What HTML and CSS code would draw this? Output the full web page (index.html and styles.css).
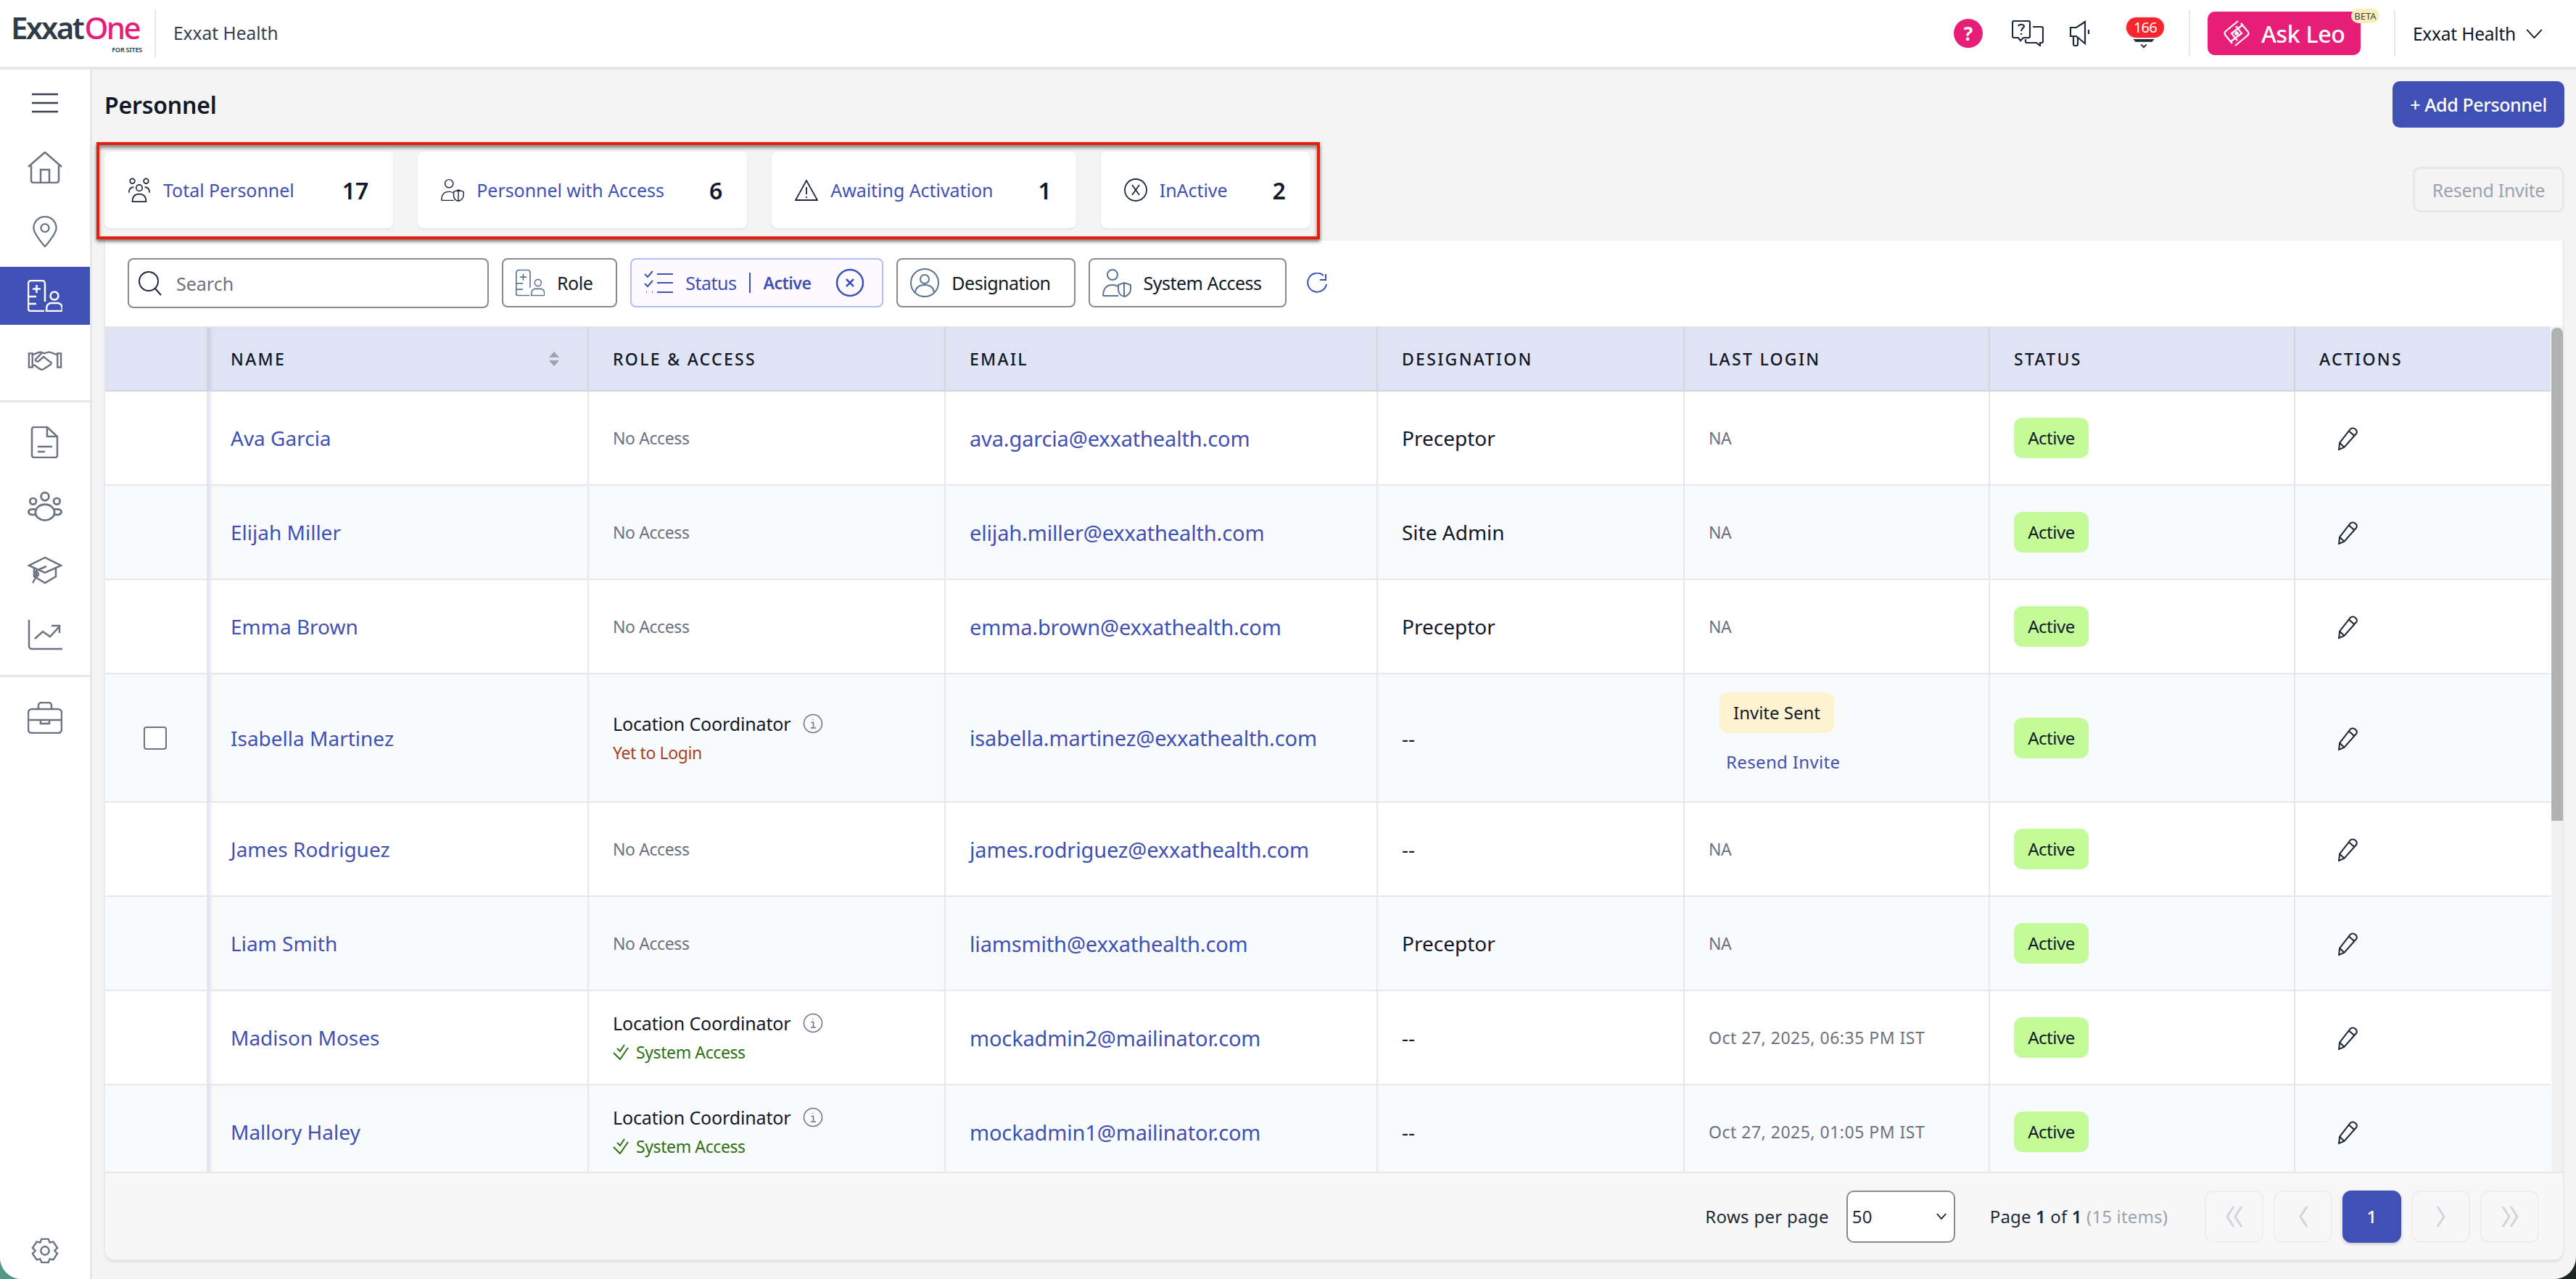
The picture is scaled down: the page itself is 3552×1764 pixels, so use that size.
FILE: index.html
```html
<!DOCTYPE html>
<html lang="en">
<head>
    <meta charset="UTF-8">
    <title>Personnel</title>
    <link rel="stylesheet" href="styles.css">
</head>
<body>
<svg class="defs" width="0" height="0">
    <symbol id="i-role" viewBox="0 0 48 44"><path d="M24 30V5a4 4 0 0 0-4-4H5a4 4 0 0 0-4 4v35a3 3 0 0 0 3 3h19M1 23h11M1 33h11"/><path d="M12.500 7v11M7 12.500h11"/><circle cx="37" cy="22" r="5.500"/><path d="M26 43c0-7 1-10 6-11h10c5 1 6 4 6 11z"/></symbol>
    <symbol id="i-pencil" viewBox="0 0 32 32"><path d="M3 30l1-9L18 3c2-2 5-2 7 0s3 4 1 6L10 27z"/><path d="M16 5l8 7M4 21l6 6"/></symbol>
    <symbol id="i-shield-user" viewBox="0 0 40 40"><circle cx="14" cy="9" r="7"/><path d="M1 38c0-10 4-15 13-15 3 0 5 .5 7 2M1 38h21"/><path d="M30 20l9 3v6c0 5-4 9-9 10-5-1-8-5-8-10v-6zM30 20v19"/></symbol>
    <symbol id="i-info" viewBox="0 0 28 28"><circle cx="14" cy="14" r="12.500"/><path d="M11.500 12.500H14.500V20M11 20h7M14 8v1"/></symbol>
    <symbol id="i-checks" viewBox="0 0 22 22"><path d="M1 12l9 9L21 5M6 6l4 4 6-9"/></symbol>
</svg>

<div class="app">
    <header class="topbar">
        <div class="brand">
            <div class="logo">
                <div class="logo-name">Exxat <span class="logo-one">One</span></div>
                <div class="logo-sub">FOR SITES</div>
            </div>
            <span class="brand-org">Exxat Health</span>
        </div>
        <div class="top-actions">
            <span class="help-dot">?</span>
            <svg class="top-icon" viewBox="0 0 44 36"><path d="M3 1h20a2 2 0 0 1 2 2v19a2 2 0 0 1-2 2h-7l-4 4-3-4H3a2 2 0 0 1-2-2V3a2 2 0 0 1 2-2z"/><path d="M29 9h12a2 2 0 0 1 2 2v18a2 2 0 0 1-2 2h-2v4l-5-4H21a2 2 0 0 1-2-2v-3"/><path d="M9 8c1-3 7-3 8 0 0 3-4 3-4 7M13 18v2"/></svg>
            <svg class="top-icon top-icon-mega" viewBox="0 0 36 36"><path d="M22 2L10 10H2v12h8l12 10zM27 13v6M6 22v11a2 2 0 0 0 2 2h2a2 2 0 0 0 2-2V24"/></svg>
            <div class="bell">
                <span class="bell-badge">166</span>
                <svg class="bell-icon" viewBox="0 0 32 16"><path d="M1 3h30M4 3v2h24V3M12 10l4 4 4-4"/></svg>
            </div>
            <span class="top-sep"></span>
            <div class="ask-leo">
                <svg class="leo-icon" viewBox="0 0 40 38"><path d="M22 2L5 16c-2 2-2 4 0 6l9 11M29 7L13 19l8 10M18 36l17-14c2-2 2-4 0-6L26 5M11 31l16-12-8-10"/><path d="M20 17l2 2-2 2-2-2z" fill="#fff"/></svg>
                <span>Ask Leo</span>
                <span class="beta">BETA</span>
            </div>
            <span class="top-sep top-sep-2"></span>
            <div class="org-menu">
                <span>Exxat Health</span>
                <svg viewBox="0 0 24 14"><path d="M1 1l11 12L23 1"/></svg>
            </div>
        </div>
    </header>

    <div class="workspace">
        <nav class="sidebar">
            <div class="nav-item"><svg class="nav-burger" viewBox="0 0 36 28"><path d="M0 2h36M0 14h36M0 26h36"/></svg></div>
            <div class="nav-item"><svg class="nav-icon" viewBox="0 0 48 44"><path d="M1 21L24 1l23 20M5 19v21a3 3 0 0 0 3 3h32a3 3 0 0 0 3-3V19M18 43V25h12v18"/></svg></div>
            <div class="nav-item"><svg class="nav-icon" viewBox="0 0 48 48"><path d="M24 2C14 2 7 10 7 19c0 9 17 28 17 28s17-19 17-28C41 10 34 2 24 2z"/><circle cx="24" cy="19" r="6"/></svg></div>
            <div class="nav-item nav-active"><svg class="nav-icon"><use href="#i-role"/></svg></div>
            <div class="nav-item"><svg class="nav-icon nav-shake" viewBox="0 0 50 30"><path d="M2 6h5v20H2zM43 6h5v20h-5zM7 8l8-3c4-2 6 0 9 1l7-2 12 4M7 23h3l7 5c3 2 5 2 7 0l9-6c2-2 1-4-1-4l-9-7-7 6c-3 2-6-1-4-3l8-8"/></svg></div>
            <hr class="nav-line">
            <div class="nav-item"><svg class="nav-icon" viewBox="0 0 40 44"><path d="M5 1h18l14 13v26a3 3 0 0 1-3 3H5a3 3 0 0 1-3-3V4a3 3 0 0 1 3-3zM23 1v13h14M10 28h20M10 35h10"/></svg></div>
            <div class="nav-item"><svg class="nav-icon" viewBox="0 0 44 38"><circle cx="22" cy="6" r="5"/><circle cx="7" cy="12" r="4"/><circle cx="37" cy="12" r="4"/><path d="M10 26c0-6 6-10 12-10s12 4 12 10c0 6-6 10-12 10s-12-4-12-10zM10 22H5c-5 1-5 6 0 7h6M34 22h5c5 1 5 6 0 7h-6"/></svg></div>
            <div class="nav-item"><svg class="nav-icon" viewBox="0 0 48 38"><path d="M24 1L2 12l22 10 22-10zM9 16v11l15 9 15-9V16M26 13L12 19v8M12 27l-5 9"/><circle cx="12" cy="24" r="3"/></svg></div>
            <div class="nav-item"><svg class="nav-icon" viewBox="0 0 48 42"><path d="M2 0v36a4 4 0 0 0 4 4h42M10 26l11-10 10 7 13-14M33 8h11v10"/></svg></div>
            <hr class="nav-line">
            <div class="nav-item"><svg class="nav-icon" viewBox="0 0 48 44"><rect x="1" y="10" width="46" height="33" rx="5"/><path d="M15 10V5a4 4 0 0 1 4-4h10a4 4 0 0 1 4 4v5M1 25h46M18 25v5h12v-5"/></svg></div>
            <div class="nav-item nav-bottom"><svg class="nav-icon nav-gear" viewBox="0 0 40 38"><path d="M15 2h10l2 5 5-1 6 9-4 4 4 4-6 9-5-1-2 5H15l-2-5-5 1-6-9 4-4-4-4 6-9 5 1z"/><circle cx="20" cy="19" r="6"/></svg></div>
        </nav>

        <main class="main">
            <div class="page-head">
                <h1>Personnel</h1>
                <button class="btn-primary">+ Add Personnel</button>
            </div>

            <div class="summary-row">
                <div class="summary-box">
                    <div class="stat">
                        <svg class="stat-icon" viewBox="0 0 32 36"><circle cx="6" cy="5" r="3.500"/><circle cx="26" cy="5" r="3.500"/><circle cx="16" cy="15" r="4.500"/><path d="M1 22c0-6 3-8 7-8M31 22c0-6-3-8-7-8M6 35c0-7 3-11 10-11s10 4 10 11z"/></svg>
                        <span class="stat-label">Total Personnel</span><b class="stat-num">17</b>
                    </div>
                    <div class="stat">
                        <svg class="stat-icon"><use href="#i-shield-user"/></svg>
                        <span class="stat-label">Personnel with Access</span><b class="stat-num">6</b>
                    </div>
                    <div class="stat">
                        <svg class="stat-icon" viewBox="0 0 32 30"><path d="M16 2L1 29h30zM16 11v10M16 24v2"/></svg>
                        <span class="stat-label">Awaiting Activation</span><b class="stat-num">1</b>
                    </div>
                    <div class="stat">
                        <svg class="stat-icon" viewBox="0 0 32 32"><circle cx="16" cy="16" r="15"/><path d="M11 9l10 14M21 9L11 23"/></svg>
                        <span class="stat-label">InActive</span><b class="stat-num">2</b>
                    </div>
                </div>
                <button class="btn-disabled">Resend Invite</button>
            </div>

            <section class="panel">
                <div class="toolbar">
                    <div class="search">
                        <svg viewBox="0 0 32 34"><circle cx="14" cy="14" r="13"/><path d="M23 24l8 9"/></svg>
                        <span>Search</span>
                    </div>
                    <div class="filter"><svg class="filter-icon"><use href="#i-role"/></svg><span>Role</span></div>
                    <div class="filter filter-on">
                        <svg class="filter-icon" viewBox="0 0 40 34"><path d="M1 5l4 4 7-8M1 18l4 4 7-8M18 5h22M18 17h22M18 30h22M3 30h1M11 30h1"/></svg>
                        <span class="filter-key">Status</span>
                        <span class="filter-bar"></span>
                        <b class="filter-val">Active</b>
                        <svg class="filter-x" viewBox="0 0 40 40"><circle cx="20" cy="20" r="18"/><path d="M15 15l10 10M25 15L15 25"/></svg>
                    </div>
                    <div class="filter"><svg class="filter-icon" viewBox="0 0 40 40"><circle cx="20" cy="20" r="19"/><circle cx="20" cy="15" r="6"/><path d="M7 33c1-7 6-10 13-10s12 3 13 10"/></svg><span>Designation</span></div>
                    <div class="filter"><svg class="filter-icon"><use href="#i-shield-user"/></svg><span>System Access</span></div>
                    <svg class="refresh" viewBox="0 0 30 30"><path d="M24 4A13 13 0 1 0 28 16M27 2v8h-8"/></svg>
                </div>

                <div class="table-area">
                    <div class="table-wrap">
                        <table>
                            <colgroup>
                                <col class="c-check"><col class="c-name"><col class="c-role"><col class="c-email"><col class="c-desig"><col class="c-login"><col class="c-status"><col class="c-actions">
                            </colgroup>
                            <thead>
                                <tr>
                                    <th></th>
                                    <th class="name-cell"><div class="th-sort">NAME<svg viewBox="0 0 16 22"><path d="M8 1l7 8H1zM8 21l7-8H1z"/></svg></div></th>
                                    <th>ROLE &amp; ACCESS</th>
                                    <th>EMAIL</th>
                                    <th>DESIGNATION</th>
                                    <th>LAST LOGIN</th>
                                    <th>STATUS</th>
                                    <th>ACTIONS</th>
                                </tr>
                            </thead>
                            <tbody>
                                <tr>
                                    <td></td>
                                    <td class="name-cell"><a>Ava Garcia</a></td>
                                    <td class="muted">No Access</td>
                                    <td><a class="email">ava.garcia@exxathealth.com</a></td>
                                    <td>Preceptor</td>
                                    <td class="muted">NA</td>
                                    <td><span class="pill">Active</span></td>
                                    <td class="action-cell"><svg class="edit"><use href="#i-pencil"/></svg></td>
                                </tr>
                                <tr>
                                    <td></td>
                                    <td class="name-cell"><a>Elijah Miller</a></td>
                                    <td class="muted">No Access</td>
                                    <td><a class="email">elijah.miller@exxathealth.com</a></td>
                                    <td>Site Admin</td>
                                    <td class="muted">NA</td>
                                    <td><span class="pill">Active</span></td>
                                    <td class="action-cell"><svg class="edit"><use href="#i-pencil"/></svg></td>
                                </tr>
                                <tr>
                                    <td></td>
                                    <td class="name-cell"><a>Emma Brown</a></td>
                                    <td class="muted">No Access</td>
                                    <td><a class="email">emma.brown@exxathealth.com</a></td>
                                    <td>Preceptor</td>
                                    <td class="muted">NA</td>
                                    <td><span class="pill">Active</span></td>
                                    <td class="action-cell"><svg class="edit"><use href="#i-pencil"/></svg></td>
                                </tr>
                                <tr class="row-tall">
                                    <td class="check-cell"><span class="checkbox"></span></td>
                                    <td class="name-cell"><a>Isabella Martinez</a></td>
                                    <td>
                                        <div class="role-line">Location Coordinator<svg class="info"><use href="#i-info"/></svg></div>
                                        <div class="role-sub role-pending">Yet to Login</div>
                                    </td>
                                    <td><a class="email">isabella.martinez@exxathealth.com</a></td>
                                    <td>--</td>
                                    <td class="invite-cell">
                                        <span class="pill pill-invite">Invite Sent</span>
                                        <a class="resend">Resend Invite</a>
                                    </td>
                                    <td><span class="pill">Active</span></td>
                                    <td class="action-cell"><svg class="edit"><use href="#i-pencil"/></svg></td>
                                </tr>
                                <tr>
                                    <td></td>
                                    <td class="name-cell"><a>James Rodriguez</a></td>
                                    <td class="muted">No Access</td>
                                    <td><a class="email">james.rodriguez@exxathealth.com</a></td>
                                    <td>--</td>
                                    <td class="muted">NA</td>
                                    <td><span class="pill">Active</span></td>
                                    <td class="action-cell"><svg class="edit"><use href="#i-pencil"/></svg></td>
                                </tr>
                                <tr>
                                    <td></td>
                                    <td class="name-cell"><a>Liam Smith</a></td>
                                    <td class="muted">No Access</td>
                                    <td><a class="email">liamsmith@exxathealth.com</a></td>
                                    <td>Preceptor</td>
                                    <td class="muted">NA</td>
                                    <td><span class="pill">Active</span></td>
                                    <td class="action-cell"><svg class="edit"><use href="#i-pencil"/></svg></td>
                                </tr>
                                <tr>
                                    <td></td>
                                    <td class="name-cell"><a>Madison Moses</a></td>
                                    <td>
                                        <div class="role-line">Location Coordinator<svg class="info"><use href="#i-info"/></svg></div>
                                        <div class="role-sub role-ok"><svg class="checks"><use href="#i-checks"/></svg>System Access</div>
                                    </td>
                                    <td><a class="email">mockadmin2@mailinator.com</a></td>
                                    <td>--</td>
                                    <td class="muted login-date">Oct 27, 2025, 06:35 PM IST</td>
                                    <td><span class="pill">Active</span></td>
                                    <td class="action-cell"><svg class="edit"><use href="#i-pencil"/></svg></td>
                                </tr>
                                <tr>
                                    <td></td>
                                    <td class="name-cell"><a>Mallory Haley</a></td>
                                    <td>
                                        <div class="role-line">Location Coordinator<svg class="info"><use href="#i-info"/></svg></div>
                                        <div class="role-sub role-ok"><svg class="checks"><use href="#i-checks"/></svg>System Access</div>
                                    </td>
                                    <td><a class="email">mockadmin1@mailinator.com</a></td>
                                    <td>--</td>
                                    <td class="muted login-date">Oct 27, 2025, 01:05 PM IST</td>
                                    <td><span class="pill">Active</span></td>
                                    <td class="action-cell"><svg class="edit"><use href="#i-pencil"/></svg></td>
                                </tr>
                            </tbody>
                        </table>
                    </div>
                    <div class="scroll-track"><div class="scroll-thumb"></div></div>
                </div>

                <footer class="pager-bar">
                    <span class="rows-label">Rows per page</span>
                    <div class="rows-select"><span>50</span><svg viewBox="0 0 16 10"><path d="M1 1l7 8 7-8"/></svg></div>
                    <span class="page-info">Page <b>1</b> of <b>1</b> <span class="page-items">(15 items)</span></span>
                    <div class="pager">
                        <span class="page-btn"><svg viewBox="0 0 26 30"><path d="M12 1L3 15l9 14M23 1l-9 14 9 14"/></svg></span>
                        <span class="page-btn"><svg viewBox="0 0 26 30"><path d="M18 1L9 15l9 14"/></svg></span>
                        <span class="page-btn page-current">1</span>
                        <span class="page-btn"><svg viewBox="0 0 26 30"><path d="M8 1l9 14-9 14"/></svg></span>
                        <span class="page-btn"><svg viewBox="0 0 26 30"><path d="M3 1l9 14-9 14M14 1l9 14-9 14"/></svg></span>
                    </div>
                </footer>
            </section>
        </main>
    </div>
</div>
</body>
</html>
```

FILE: styles.css
```css
* {
    box-sizing: border-box;
}
html, body {
    height: 100%;
}
body {
    margin: 0;
    font-family: "Noto Sans", "Open Sans", sans-serif;
    font-size: 26px;
    color: #111827;
    background: linear-gradient(90deg, #4f9a85 0 4%, #1c2622 96%);
    overflow: hidden;
}
svg {
    fill: none;
    stroke: currentColor;
    stroke-width: 2;
    flex: none;
}
.defs {
    position: absolute;
}
.app {
    height: 1764px;
    width: 3552px;
    display: flex;
    flex-direction: column;
    background: #f4f4f4;
    border-radius: 0 0 30px 30px;
    overflow: hidden;
}

/* top bar */
.topbar {
    height: 96px;
    flex: none;
    display: flex;
    align-items: center;
    justify-content: space-between;
    background: #fff;
    border-bottom: 4px solid #e5e7eb;
}
.brand {
    display: flex;
    align-items: center;
    padding-left: 15px;
}
.logo {
    width: 198px;
    height: 66px;
    padding-right: 17px;
}
.logo-name {
    font-size: 42px;
    font-weight: 600;
    line-height: 50px;
    letter-spacing: -2.600px;
    color: #2f3b47;
    white-space: nowrap;
    word-spacing: -6px;
}
.logo-one {
    color: #e61e78;
    font-weight: 500;
}
.logo-sub {
    font-size: 9px;
    font-weight: 600;
    line-height: 12px;
    text-align: right;
    color: #2f3b47;
    letter-spacing: -.2px;
}
.brand-org {
    font-size: 24.500px;
    color: #374151;
    padding-left: 24px;
    border-left: 2px solid #e5e7eb;
    line-height: 66px;
}
.top-actions {
    display: flex;
    align-items: center;
    padding-right: 46px;
}
.help-dot {
    width: 40px;
    height: 40px;
    border-radius: 50%;
    background: #e61e78;
    color: #fff;
    font-weight: 700;
    font-size: 26px;
    display: flex;
    align-items: center;
    justify-content: center;
}
.top-icon {
    width: 44px;
    height: 36px;
    margin-left: 40px;
    color: #1f2937;
    stroke-width: 2.200;
}
.top-icon-mega {
    width: 36px;
    margin-left: 35px;
}
.bell {
    width: 52px;
    margin-left: 43px;
    height: 44px;
    display: flex;
    flex-direction: column;
    align-items: center;
}
.bell-badge {
    width: 52px;
    height: 28px;
    background: #f9252e;
    color: #fff;
    border-radius: 14px;
    font-size: 20px;
    line-height: 28px;
    text-align: center;
    letter-spacing: -.8px;
    box-shadow: 0 0 3px rgba(0, 0, 0, .25);
}
.bell-icon {
    width: 30px;
    height: 15px;
    margin-right: 4px;
    color: #1f2937;
}
.top-sep {
    width: 2px;
    height: 64px;
    background: #e5e7eb;
    margin-left: 34px;
}
.top-sep-2 {
    margin-left: 46px;
}
.ask-leo {
    width: 211px;
    height: 60px;
    margin-left: 24px;
    border-radius: 10px;
    background: #e61e78;
    color: #fff;
    font-size: 32px;
    font-weight: 500;
    display: flex;
    align-items: center;
    gap: 14px;
    padding-left: 20px;
    letter-spacing: -.3px;
    position: relative;
}
.leo-icon {
    width: 40px;
    height: 38px;
    stroke-width: 2.200;
}
.beta {
    position: absolute;
    top: -4px;
    right: -26px;
    width: 39px;
    height: 20px;
    border-radius: 10px;
    background: #fdeeb9;
    color: #374151;
    font-size: 13px;
    font-weight: 400;
    line-height: 20px;
    text-align: center;
    letter-spacing: 0;
}
.org-menu {
    display: flex;
    align-items: center;
    gap: 14px;
    margin-left: 24px;
    font-size: 24.500px;
    letter-spacing: -.2px;
}
.org-menu svg {
    width: 23px;
    height: 13px;
}

/* side nav */
.workspace {
    flex: 1;
    min-height: 0;
    display: flex;
}
.sidebar {
    width: 127px;
    flex: none;
    display: flex;
    flex-direction: column;
    gap: 8.500px;
    padding-top: 6px;
    background: #fff;
    border-right: 3px solid #e5e7eb;
    color: #6b7280;
}
.nav-item {
    height: 80px;
    flex: none;
    display: flex;
    align-items: center;
    justify-content: center;
}
.nav-active {
    background: #3f51b5;
    color: #fff;
}
.nav-bottom {
    margin-top: auto;
    height: 78px;
}
.nav-line {
    width: 100%;
    height: 3px;
    margin: 7px 0;
    border: 0;
    background: #e5e7eb;
    flex: none;
}
.nav-icon {
    width: 48px;
    height: 44px;
    stroke-width: 2.500;
}
.nav-burger {
    width: 36px;
    height: 28px;
    color: #374151;
    stroke-width: 2.500;
}
.nav-shake {
    height: 30px;
}
.nav-gear {
    width: 38px;
    height: 38px;
}

/* main */
.main {
    flex: 1;
    min-width: 0;
    display: flex;
    flex-direction: column;
    padding: 16px 17px 25px 17px;
}
.page-head {
    height: 64px;
    flex: none;
    display: flex;
    align-items: center;
    justify-content: space-between;
    margin-right: -1px;
}
h1 {
    margin: 0;
    font-size: 32px;
    font-weight: 600;
    color: #111827;
    letter-spacing: -.2px;
}
.btn-primary {
    width: 237px;
    height: 64px;
    border: 0;
    border-radius: 10px;
    background: #3f51b5;
    color: #fff;
    font: 500 25px "Noto Sans", sans-serif;
    letter-spacing: -.4px;
    padding: 0;
}
.summary-row {
    display: flex;
    align-items: flex-start;
    margin: 20px -1px 2px -11px;
    height: 134px;
    flex: none;
}
.summary-box {
    height: 134px;
    display: flex;
    gap: 34px;
    padding: 9px 9px 11px 7px;
    border: 4px solid #ec1c0c;
    box-shadow: 0 3px 5px rgba(0, 0, 0, .55), inset 0 4px 5px rgba(0, 0, 0, .45);
    position: relative;
    z-index: 2;
}
.stat {
    height: 106px;
    display: flex;
    align-items: center;
    padding: 0 34px 0 32px;
    background: #fff;
    border-radius: 8px;
    box-shadow: 0 1px 2px rgba(0, 0, 0, .12);
}
.stat-icon {
    width: 32px;
    height: 34px;
    margin-right: 17px;
    color: #1f2937;
    stroke-width: 1.800;
}
.stat-label {
    color: #3f51b5;
    font-size: 25px;
    letter-spacing: -.05px;
    white-space: nowrap;
}
.stat-num {
    margin-left: 62px;
    font-size: 32px;
    font-weight: 600;
    color: #111827;
}
.stat:first-child .stat-num {
    margin-left: 66px;
}
.btn-disabled {
    margin: 34px 0 0 auto;
    width: 209px;
    height: 63px;
    border: 3px solid #e5e7eb;
    border-radius: 10px;
    background: #f4f4f4;
    color: #9ca3af;
    font: 400 25px "Noto Sans", sans-serif;
    letter-spacing: -.3px;
    padding: 0;
}

/* panel */
.panel {
    flex: 1;
    min-height: 0;
    display: flex;
    flex-direction: column;
    border: 1px solid #e5e7eb;
    border-top: 0;
    border-bottom-width: 2px;
    border-radius: 0 0 14px 14px;
    background: #f7f7f7;
    box-shadow: 0 2px 3px rgba(0, 0, 0, .08);
    overflow: hidden;
}
.toolbar {
    height: 118px;
    flex: none;
    display: flex;
    align-items: flex-start;
    gap: 18px;
    padding: 24px 0 0 31px;
    background: #fff;
}
.search {
    width: 498px;
    height: 69px;
    display: flex;
    align-items: center;
    gap: 20px;
    padding-left: 13px;
    border: 2.500px solid #8a8a8a;
    border-radius: 8px;
    color: #6b7280;
    font-size: 25px;
}
.search svg {
    width: 32px;
    height: 34px;
    color: #1f2937;
}
.filter {
    height: 68px;
    display: flex;
    align-items: center;
    gap: 17px;
    padding: 0 32px 0 17px;
    border: 2.500px solid #8a8a8a;
    border-radius: 8px;
    font-size: 25px;
    letter-spacing: -.5px;
    white-space: nowrap;
}
.filter-icon {
    width: 40px;
    height: 40px;
    color: #5b7492;
    stroke-width: 2;
}
.filter-on {
    background: #fdfaff;
    border-color: #b4bdf5;
    color: #3f51b5;
    padding-right: 24px;
}
.filter-on .filter-icon {
    color: #3f51b5;
    height: 34px;
}
.filter-bar {
    width: 2px;
    height: 28px;
    background: #3f51b5;
}
.filter-val {
    font-size: 23px;
    font-weight: 600;
}
.filter-key {
    margin-right: 1px;
}
.filter-x {
    width: 40px;
    height: 40px;
    margin-left: 17px;
    stroke-width: 2.500;
}
.refresh {
    width: 30px;
    height: 30px;
    margin: 20px 0 0 9px;
    color: #3f51b5;
}

/* table */
.table-area {
    flex: 1;
    min-height: 0;
    display: flex;
    background: #fff;
}
.table-wrap {
    flex: 1;
    min-width: 0;
    overflow: hidden;
}
.scroll-track {
    width: 16px;
    flex: none;
    padding-top: 2px;
    background: #f1f1f1;
}
.scroll-thumb {
    height: 680px;
    background: #b1b1b1;
    border-radius: 8px 8px 0 0;
}
table {
    width: 3372px;
    table-layout: fixed;
    border-collapse: separate;
    border-spacing: 0;
}
.c-check { width: 142px; }
.c-name { width: 525px; }
.c-role { width: 492px; }
.c-email { width: 596px; }
.c-desig { width: 423px; }
.c-login { width: 421px; }
.c-status { width: 421px; }
.c-actions { width: 352px; }
th, td {
    padding: 0 0 0 33px;
    text-align: left;
    border-right: 2px solid #e5e7eb;
    border-bottom: 2px solid #e5e7eb;
}
th:last-child, td:last-child {
    border-right: 0;
}
th {
    height: 90px;
    background: #e0e3f4;
    font-size: 23px;
    font-weight: 500;
    letter-spacing: 2.300px;
    border-color: #d1d5e0;
    border-top: 2px solid #e5e7eb;
}
td {
    height: 130px;
    font-size: 28px;
    background: #fff;
}
tbody tr:nth-child(even) td {
    background: #f9fafb;
}
.row-tall td {
    height: 177px;
}
td.name-cell, th.name-cell {
    padding-left: 31px;
    box-shadow: inset 7px 0 6px -5px rgba(63, 81, 181, .22);
}
.name-cell a {
    font-size: 28px;
    color: #3f51b5;
}
.th-sort {
    display: flex;
    align-items: center;
    justify-content: space-between;
    padding-right: 38px;
}
.th-sort svg {
    width: 16px;
    height: 22px;
    fill: #9ca3af;
    stroke: none;
}
.email {
    color: #3f51b5;
    font-size: 29px;
    letter-spacing: -.15px;
}
td.muted {
    font-size: 23px;
    color: #6b7280;
    letter-spacing: -.4px;
}
td.login-date {
    letter-spacing: .5px;
}
td.check-cell {
    padding-left: 53px;
}
.checkbox {
    display: block;
    width: 32px;
    height: 32px;
    background: #fff;
    border: 2.500px solid #6b7280;
    border-radius: 4px;
}
.role-line {
    display: flex;
    align-items: center;
    gap: 17px;
    font-size: 25px;
    letter-spacing: -.15px;
    line-height: 34px;
}
.info {
    width: 28px;
    height: 28px;
    color: #6b7280;
    stroke-width: 1.500;
}
.role-sub {
    display: flex;
    align-items: center;
    gap: 10px;
    font-size: 23px;
    letter-spacing: -.4px;
    line-height: 34px;
    margin-top: 6px;
}
.role-pending {
    color: #a34425;
}
.role-ok {
    color: #2f7012;
}
.checks {
    width: 22px;
    height: 22px;
}
.pill {
    display: inline-block;
    height: 56px;
    width: 103px;
    border-radius: 12px;
    background: #c3fb98;
    color: #111827;
    font-size: 24px;
    line-height: 56px;
    text-align: center;
    letter-spacing: -.5px;
}
.pill-invite {
    display: block;
    width: 158px;
    background: #fef3d0;
    margin: 0 0 25px 15px;
    letter-spacing: 0;
}
.resend {
    display: block;
    margin-left: 24px;
    color: #3f51b5;
    font-size: 24px;
    line-height: 30px;
    letter-spacing: .35px;
}
td.invite-cell {
    padding-bottom: 15px;
}
td.action-cell {
    padding-left: 57px;
    padding-top: 3px;
}
.edit {
    display: block;
    width: 33px;
    height: 33px;
    color: #1f2937;
    stroke-width: 2;
}

/* pager */
.pager-bar {
    height: 121px;
    flex: none;
    display: flex;
    align-items: center;
    justify-content: flex-end;
    padding-right: 33px;
    background: #f7f7f7;
    border-top: 2px solid #e5e7eb;
    font-size: 24px;
    color: #1f2937;
    letter-spacing: .15px;
}
.rows-label {
    letter-spacing: .3px;
}
.rows-select {
    width: 150px;
    height: 72px;
    display: flex;
    align-items: center;
    justify-content: space-between;
    margin: 0 48px 0 24px;
    padding: 0 10px 0 6px;
    background: #fff;
    border: 2.500px solid #8a8a8a;
    border-radius: 10px;
}
.rows-select svg {
    width: 14px;
    height: 9px;
    color: #111827;
}
.page-info b {
    font-weight: 600;
}
.page-items {
    color: #9ca3af;
}
.pager {
    display: flex;
    gap: 14px;
    margin-left: 51px;
}
.page-btn {
    width: 81px;
    height: 72px;
    display: flex;
    align-items: center;
    justify-content: center;
    border: 2px solid #eeeeef;
    border-radius: 12px;
    color: #d1d5db;
}
.page-btn svg {
    width: 26px;
    height: 30px;
    stroke-width: 3;
}
.page-current {
    background: #3f51b5;
    border-color: #3f51b5;
    color: #fff;
    font-weight: 500;
    box-shadow: 0 2px 4px rgba(0, 0, 0, .2);
}
```
